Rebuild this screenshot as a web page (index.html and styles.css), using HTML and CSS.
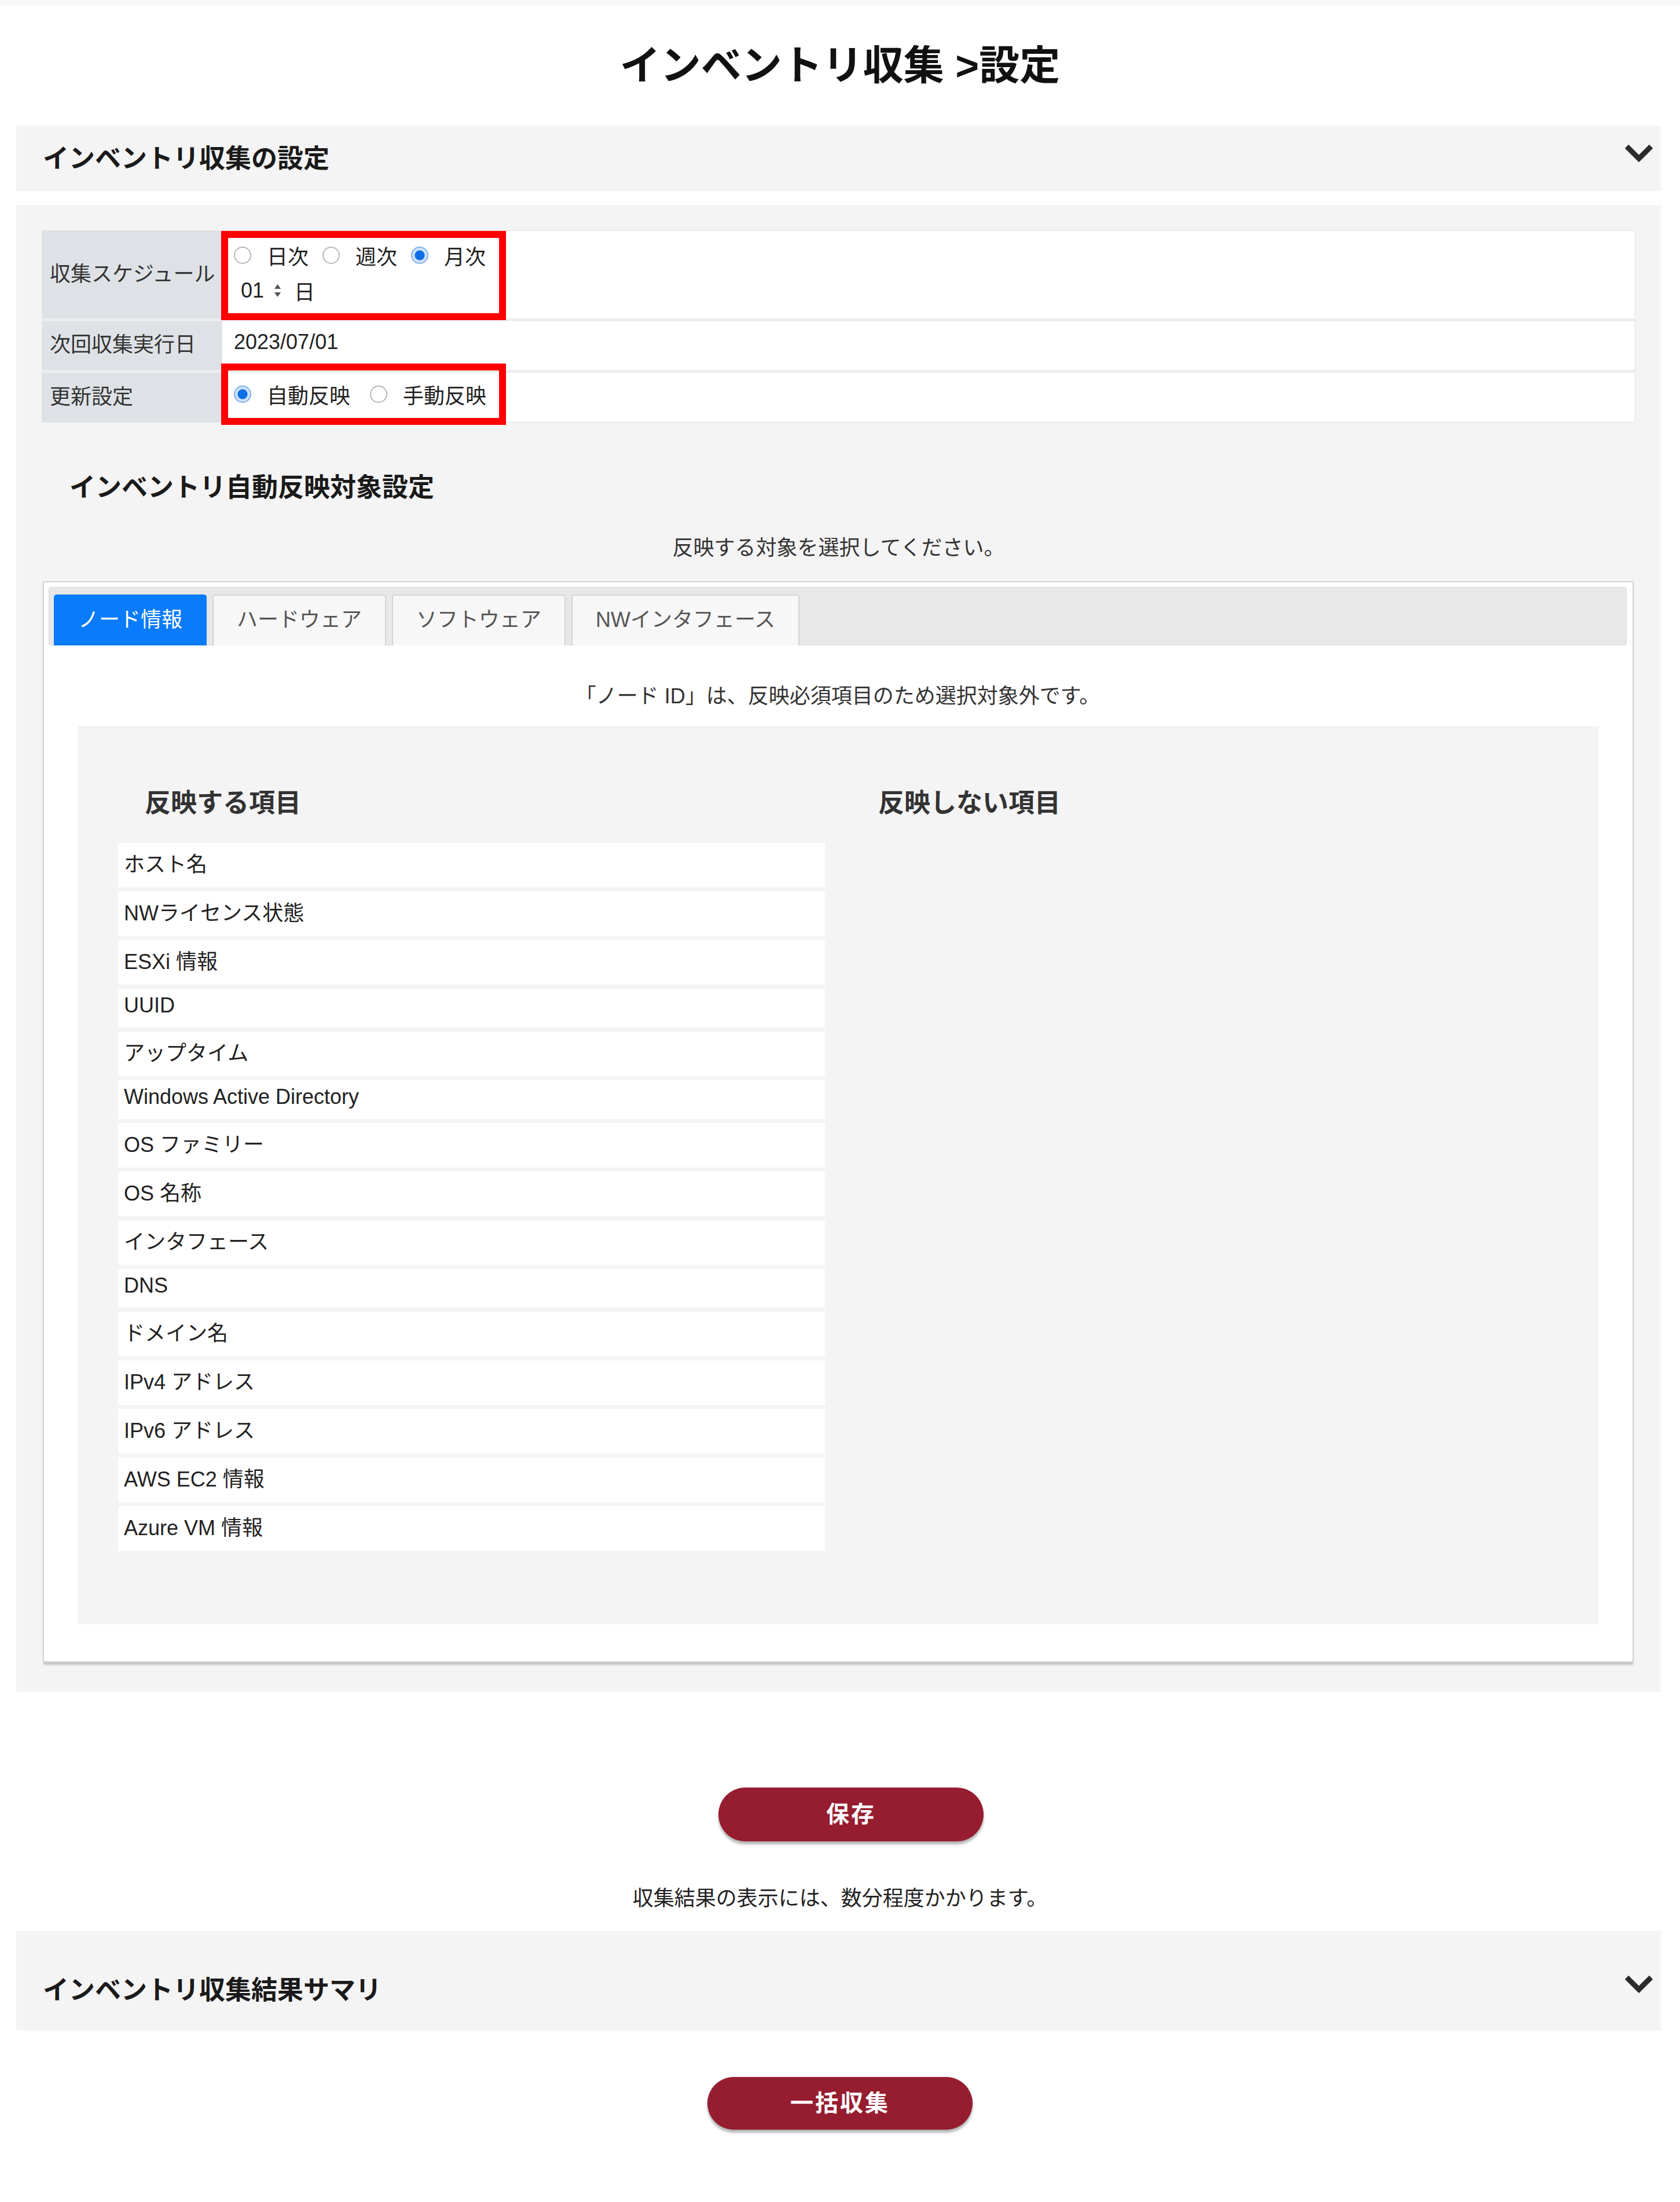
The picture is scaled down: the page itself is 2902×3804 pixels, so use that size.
FILE: index.html
```html
<!DOCTYPE html>
<html lang="ja">
<head>
    <meta charset="UTF-8">
    <meta name="viewport" content="width=device-width, initial-scale=1.0">
    <title>インベントリ収集 &gt;設定</title>
    <link rel="stylesheet" href="styles.css">
</head>
<body>
    <div class="top-strip"></div>
    <h1 class="page-title">インベントリ収集 &gt;設定</h1>

    <div class="section-head">
        <span>インベントリ収集の設定</span>
        <svg class="chevron" width="52" height="34" viewBox="0 0 52 34"><polyline points="5,6 26,27 47,6"/></svg>
    </div>

    <div class="panel">
        <table class="setting-table">
            <tr class="row-schedule">
                <th>収集スケジュール</th>
                <td>
                    <div class="mark mark-schedule"></div>
                    <div class="line">
                        <label class="opt"><input type="radio" name="sched">日次</label>
                        <label class="opt"><input type="radio" name="sched">週次</label>
                        <label class="opt"><input type="radio" name="sched" checked>月次</label>
                    </div>
                    <div class="line day-select">
                        <span class="sel-value">01</span>
                        <svg class="sel-arrows" width="13" height="24" viewBox="0 0 13 24"><polygon points="6.5,1 12,9 1,9"/><polygon points="1,15 12,15 6.5,23"/></svg>
                        <span>日</span>
                    </div>
                </td>
            </tr>
            <tr class="row-next">
                <th>次回収集実行日</th>
                <td>2023/07/01</td>
            </tr>
            <tr class="row-update">
                <th>更新設定</th>
                <td>
                    <div class="mark mark-update"></div>
                    <label class="opt"><input type="radio" name="upd" checked>自動反映</label>
                    <label class="opt"><input type="radio" name="upd">手動反映</label>
                </td>
            </tr>
        </table>

        <h2 class="sub-title">インベントリ自動反映対象設定</h2>
        <p class="lead">反映する対象を選択してください。</p>

        <div class="tab-box">
            <div class="tab-bar">
                <div class="tab active">ノード情報</div>
                <div class="tab">ハードウェア</div>
                <div class="tab">ソフトウェア</div>
                <div class="tab">NWインタフェース</div>
            </div>
            <p class="tab-note">「ノード ID」は、反映必須項目のため選択対象外です。</p>

            <div class="pick-area">
                <div class="pick-col">
                    <h3 class="col-title">反映する項目</h3>
                    <ul class="pick-list">
                        <li>ホスト名</li>
                        <li>NWライセンス状態</li>
                        <li>ESXi 情報</li>
                        <li>UUID</li>
                        <li>アップタイム</li>
                        <li>Windows Active Directory</li>
                        <li>OS ファミリー</li>
                        <li>OS 名称</li>
                        <li>インタフェース</li>
                        <li>DNS</li>
                        <li>ドメイン名</li>
                        <li>IPv4 アドレス</li>
                        <li>IPv6 アドレス</li>
                        <li>AWS EC2 情報</li>
                        <li>Azure VM 情報</li>
                    </ul>
                </div>
                <div class="pick-col">
                    <h3 class="col-title">反映しない項目</h3>
                    <ul class="pick-list"></ul>
                </div>
            </div>
        </div>
    </div>

    <div class="save-row">
        <button class="btn" type="button">保存</button>
    </div>
    <p class="result-note">収集結果の表示には、数分程度かかります。</p>

    <div class="section-head tall">
        <span>インベントリ収集結果サマリ</span>
        <svg class="chevron" width="52" height="34" viewBox="0 0 52 34"><polyline points="5,6 26,27 47,6"/></svg>
    </div>

    <div class="collect-row">
        <button class="btn" type="button">一括収集</button>
    </div>
</body>
</html>
```

FILE: styles.css
```css
* {
    box-sizing: border-box;
}

body {
    margin: 0;
    font-family: "Liberation Sans", "Noto Sans CJK JP", sans-serif;
    font-size: 36px;
    color: #333;
    background: #fff;
}

.top-strip {
    height: 10px;
    background: #f8f8f8;
}

.page-title {
    margin: 65px 0 63px;
    text-align: center;
    font-size: 70px;
    line-height: 79px;
    font-weight: bold;
    color: #111;
}

.section-head {
    display: flex;
    align-items: center;
    justify-content: space-between;
    height: 113px;
    margin: 0 33px 0 28px;
    padding: 0 12px 6px 46px;
    background: #f4f4f4;
    font-size: 45px;
    font-weight: bold;
    color: #1a1a1a;
}

.section-head.tall {
    height: 172px;
    padding-top: 30px;
}

.chevron {
    margin-bottom: 14px;
    fill: none;
    stroke: #2b2b2b;
    stroke-width: 9;
}

.panel {
    margin: 24px 33px 0 28px;
    padding: 44px 44px 51px;
    background: #f4f4f4;
}

/* settings table */
.setting-table {
    width: 100%;
    border-collapse: separate;
    border-spacing: 0;
    background: #fff;
    border: 1px solid #e2e2e2;
}

.setting-table th {
    width: 311px;
    padding: 0 0 10px 13px;
    background: #dee2e6;
    text-align: left;
    font-weight: normal;
    white-space: nowrap;
    color: #333;
}

.setting-table td {
    position: relative;
    padding: 0 20px 12px;
    vertical-align: middle;
    color: #222;
}

.setting-table tr:not(:last-child) > * {
    border-bottom: 5px solid #ededed;
}

.row-schedule > * {
    height: 156px;
}

.row-schedule td {
    padding-bottom: 6px;
}

.row-next > * {
    height: 89px;
}

.row-update > * {
    height: 85px;
}

.line {
    display: flex;
    align-items: center;
    height: 61px;
}

.opt {
    display: inline-flex;
    align-items: center;
    margin-right: 24px;
    vertical-align: middle;
}

.opt input[type="radio"] {
    appearance: none;
    width: 30px;
    height: 30px;
    margin: 0 27px 0 0;
    border: 2px solid #b8b8b8;
    border-radius: 50%;
    background: #fff;
}

.opt input[type="radio"]:checked {
    border-color: #7fb1ee;
    background: radial-gradient(circle, #0f6fe8 0 8px, #cfe2fb 9px 100%);
}

.day-select {
    padding-left: 12px;
}

.sel-arrows {
    margin: 0 22px 0 17px;
    fill: #555;
}

/* annotation boxes drawn over the form */
.mark {
    position: absolute;
    left: -2px;
    width: 492px;
    border: 12px solid #ff0000;
    pointer-events: none;
}

.mark-schedule {
    top: 0;
    height: 154px;
}

.mark-update {
    top: -16px;
    height: 106px;
}

.sub-title {
    margin: 83px 0 0 48px;
    font-size: 45px;
    line-height: 60px;
    font-weight: bold;
    color: #1a1a1a;
}

.lead {
    margin: 49px 0 0;
    line-height: 50px;
    text-align: center;
}

/* tabs */
.tab-box {
    margin: 32px 3px 0 2px;
    padding: 8px 10px 64px 8px;
    background: #fff;
    border: 2px solid #d4d4d4;
    box-shadow: 0 5px 3px -1px rgba(0, 0, 0, 0.2);
}

.tab-bar {
    display: flex;
    gap: 10px;
    height: 101px;
    padding: 12px 8px 0;
    background: #e8e8e8;
    border: 1px solid #dadada;
    border-radius: 4px;
}

.tab {
    display: flex;
    align-items: center;
    height: 88px;
    padding: 0 40px 10px;
    background: #f7f7f7;
    border: 2px solid #d3d3d3;
    border-bottom: none;
    border-radius: 5px 5px 0 0;
    color: #555;
}

.tab.active {
    background: #0a7bfa;
    border-color: #0a7bfa;
    color: #fff;
}

.tab-note {
    margin: 63px 0 0;
    line-height: 50px;
    text-align: center;
}

.pick-area {
    display: grid;
    grid-template-columns: 1fr 1fr;
    column-gap: 46px;
    margin: 26px 48px 0 50px;
    padding: 105px 70px 127px;
    background: #f4f4f4;
}

.col-title {
    margin: 0 0 39px 46px;
    font-size: 45px;
    line-height: 58px;
    font-weight: bold;
    color: #333;
}

.pick-list {
    display: flex;
    flex-direction: column;
    gap: 7px;
    margin: 0;
    padding: 0;
    list-style: none;
}

.pick-list li {
    padding: 8px 10px 17px;
    background: #fff;
    color: #222;
}

/* buttons */
.save-row {
    margin-top: 165px;
    padding-left: 38px;
    text-align: center;
}

.collect-row {
    margin: 80px 0 96px;
    text-align: center;
}

.btn {
    width: 458px;
    height: 93px;
    padding: 0 0 8px;
    border: none;
    border-radius: 47px;
    background: #961d2f;
    color: #fff;
    font-family: inherit;
    font-size: 40px;
    font-weight: bold;
    letter-spacing: 3px;
    box-shadow: 0 5px 4px rgba(0, 0, 0, 0.3);
    cursor: pointer;
}

.collect-row .btn {
    height: 91px;
}

.result-note {
    margin: 74px 0 31px;
    line-height: 50px;
    text-align: center;
    color: #222;
}
```
